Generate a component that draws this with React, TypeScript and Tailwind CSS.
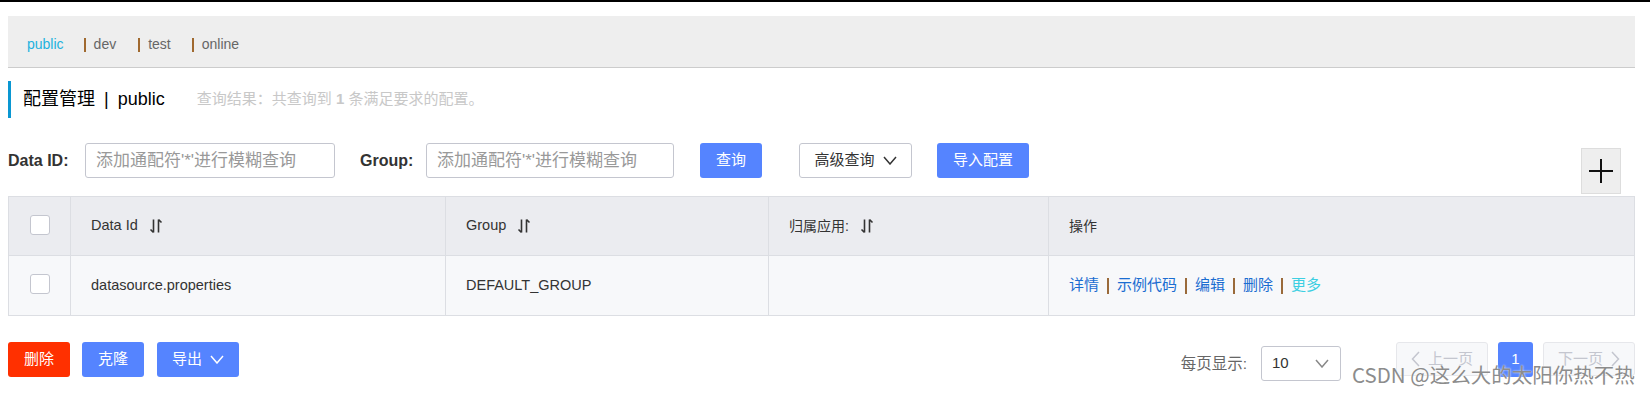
import React from "react";

function SortIcon() {
  return (
    <svg width="14" height="16" viewBox="0 0 14 16" fill="none" stroke="#333" strokeWidth="1.6" className="ml-[11px]">
      <path d="M4.5 1.5V14.5M4.5 14.5L1.5 11.5" />
      <path d="M9.5 14.5V1.5M9.5 1.5L12.5 4.5" />
    </svg>
  );
}

function ChevronDown({ color, w = 14, h = 8 }: { color: string; w?: number; h?: number }) {
  return (
    <svg width={w} height={h + 1} viewBox={`0 0 ${w} ${h + 1}`} fill="none" stroke={color} strokeWidth="1.5">
      <path d={`M1 1L${w / 2} ${h}L${w - 1} 1`} />
    </svg>
  );
}

function ChevronLeft({ color }: { color: string }) {
  return (
    <svg width="9" height="16" viewBox="0 0 9 16" fill="none" stroke={color} strokeWidth="1.5">
      <path d="M8 1L1.5 8L8 15" />
    </svg>
  );
}

function ChevronRight({ color }: { color: string }) {
  return (
    <svg width="9" height="16" viewBox="0 0 9 16" fill="none" stroke={color} strokeWidth="1.5">
      <path d="M1 1L7.5 8L1 15" />
    </svg>
  );
}

function Checkbox() {
  return <div className="h-[20px] w-[20px] rounded-[3px] border border-[#c4c6cf] bg-white" />;
}

function Sep() {
  return <span className="mx-[8px] inline-block h-[16px] w-[2px] bg-[#9a6a3a]" />;
}

export default function App() {
  return (
    <div className="relative h-[395px] w-[1650px] overflow-hidden bg-white font-['Liberation_Sans','Noto_Sans_CJK_SC',sans-serif] text-[14px] text-[#333]">
      <div className="h-[2px] bg-black" />
      <div className="pl-[8px] pr-[15px] pt-[14px]">
        {/* namespace tab bar */}
        <div className="flex h-[52px] items-center border-b border-[#cccccc] bg-[#eeeeee] pl-[19px] pt-[6px] text-[14px] text-[#666]">
          <span className="text-[#22b2de]">public</span>
          <span className="ml-[20px] mr-[8px] inline-block h-[14px] w-[2px] bg-[#a0692f]" />
          <span>dev</span>
          <span className="ml-[22px] mr-[8px] inline-block h-[14px] w-[2px] bg-[#a0692f]" />
          <span>test</span>
          <span className="ml-[21px] mr-[8px] inline-block h-[14px] w-[2px] bg-[#a0692f]" />
          <span>online</span>
        </div>

        {/* title */}
        <div className="mt-[13px] flex h-[37px] items-center border-l-[3px] border-[#0a97d2] pl-[12px]">
          <span className="text-[18px] text-black">配置管理</span>
          <span className="mx-[9px] text-[18px] text-black">|</span>
          <span className="text-[18px] text-black">public</span>
          <span className="ml-[32px] text-[15px] text-[#c8c8c8]">
            查询结果：共查询到 <b className="font-bold">1</b> 条满足要求的配置。
          </span>
        </div>

        {/* search row */}
        <div className="mt-[25px] flex items-start">
          <div className="flex h-[35px] items-center">
            <span className="w-[77px] text-[16px] font-bold text-[#333]">Data ID:</span>
            <input
              className="h-[35px] w-[250px] rounded-[3px] border border-[#c4c6cf] bg-white px-[10px] text-[17px] outline-none placeholder:text-[#999]"
              placeholder="添加通配符'*'进行模糊查询"
            />
            <span className="ml-[25px] w-[66px] text-[16px] font-bold text-[#333]">Group:</span>
            <input
              className="h-[35px] w-[248px] rounded-[3px] border border-[#c4c6cf] bg-white px-[10px] text-[17px] outline-none placeholder:text-[#999]"
              placeholder="添加通配符'*'进行模糊查询"
            />
            <button className="ml-[26px] flex h-[35px] w-[62px] items-center justify-center rounded-[3px] bg-[#5584ff] text-[15px] text-white">
              查询
            </button>
            <button className="ml-[37px] flex h-[35px] w-[113px] items-center justify-center gap-[8px] rounded-[3px] border border-[#c4c6cf] bg-white text-[15px] text-[#333]">
              高级查询
              <ChevronDown color="#333" />
            </button>
            <button className="ml-[25px] flex h-[35px] w-[92px] items-center justify-center rounded-[3px] bg-[#5584ff] text-[15px] text-white">
              导入配置
            </button>
          </div>
          <div className="ml-auto mr-[14px] mt-[5px] flex h-[46px] w-[40px] items-center justify-center border border-[#dddddd] bg-[#eeeeee]">
            <svg width="26" height="26" viewBox="0 0 26 26" stroke="#111" strokeWidth="2">
              <path d="M13 1V25M1 13H25" />
            </svg>
          </div>
        </div>

        {/* table */}
        <div className="mt-[2px] border border-[#dcdee3]">
          <div className="grid h-[59px] grid-cols-[62px_375px_323px_280px_1fr] border-b border-[#dcdee3] bg-[#ebecf0] text-[14.5px] text-[#333]">
            <div className="flex items-center justify-center border-r border-[#dcdee3] pb-[3px]">
              <Checkbox />
            </div>
            <div className="flex items-center border-r border-[#dcdee3] pl-[20px]">
              Data Id <SortIcon />
            </div>
            <div className="flex items-center border-r border-[#dcdee3] pl-[20px]">
              Group <SortIcon />
            </div>
            <div className="flex items-center border-r border-[#dcdee3] pl-[20px] text-[14px]">
              归属应用: <SortIcon />
            </div>
            <div className="flex items-center pl-[20px] text-[14px]">操作</div>
          </div>
          <div className="grid h-[59px] grid-cols-[62px_375px_323px_280px_1fr] bg-[#f7f8fa] text-[14.5px] text-[#333]">
            <div className="flex items-center justify-center border-r border-[#dcdee3] pb-[3px]">
              <Checkbox />
            </div>
            <div className="flex items-center border-r border-[#dcdee3] pl-[20px]">datasource.properties</div>
            <div className="flex items-center border-r border-[#dcdee3] pl-[20px]">DEFAULT_GROUP</div>
            <div className="flex items-center border-r border-[#dcdee3] pl-[20px]" />
            <div className="flex items-center pl-[20px] text-[15px] text-[#1b6dd1]">
              <span>详情</span>
              <Sep />
              <span>示例代码</span>
              <Sep />
              <span>编辑</span>
              <Sep />
              <span>删除</span>
              <Sep />
              <span className="text-[#3ccfe2]">更多</span>
            </div>
          </div>
        </div>

        {/* bottom bar */}
        <div className="mt-[26px] flex items-start">
          <button className="flex h-[35px] w-[62px] items-center justify-center rounded-[3px] bg-[#ff3000] text-[15px] text-white">
            删除
          </button>
          <button className="ml-[12px] flex h-[35px] w-[62px] items-center justify-center rounded-[3px] bg-[#5584ff] text-[15px] text-white">
            克隆
          </button>
          <button className="ml-[13px] flex h-[35px] w-[82px] items-center justify-center gap-[8px] rounded-[3px] bg-[#5584ff] text-[15px] text-white">
            导出
            <ChevronDown color="#ffffff" />
          </button>

          <div className="ml-auto flex items-start">
            <span className="mt-[10px] text-[15.5px] text-[#666]">每页显示:</span>
            <div className="ml-[14px] mt-[4px] flex h-[35px] w-[80px] items-center justify-between rounded-[3px] border border-[#c4c6cf] bg-white pl-[10px] pr-[11px] text-[15px] text-[#333]">
              <span>10</span>
              <ChevronDown color="#888" />
            </div>
            <button className="ml-[55px] flex h-[34px] w-[92px] items-center justify-center gap-[8px] rounded-[3px] border border-[#e6e7eb] bg-[#f7f8fa] text-[15px] text-[#c4c6cf]">
              <ChevronLeft color="#c4c6cf" />
              上一页
            </button>
            <button className="ml-[10px] flex h-[35px] w-[35px] items-center justify-center rounded-[3px] bg-[#5584ff] text-[15px] text-white">
              1
            </button>
            <button className="ml-[10px] flex h-[34px] w-[92px] items-center justify-center gap-[8px] rounded-[3px] border border-[#e6e7eb] bg-[#f7f8fa] text-[15px] text-[#c4c6cf]">
              下一页
              <ChevronRight color="#c4c6cf" />
            </button>
          </div>
        </div>
      </div>

      {/* watermark */}
      <div className="absolute left-[1352px] top-[361px] whitespace-nowrap font-['Noto_Sans_CJK_SC',sans-serif] text-[20.5px] leading-[26px] text-[#8c8c8c] [text-shadow:0_0_2px_#ffffff]">
        CSDN @这么大的太阳你热不热
      </div>
    </div>
  );
}
